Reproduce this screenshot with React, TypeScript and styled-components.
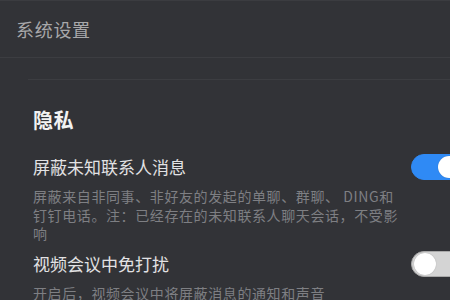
import styled, { createGlobalStyle } from 'styled-components';

const GlobalStyle = createGlobalStyle`
  html, body {
    margin: 0;
    padding: 0;
    background: #323337;
    overflow: hidden;
  }
  body {
    font-family: "Noto Sans CJK SC", "Noto Sans", sans-serif;
  }
`;

interface ISettingItem {
  title: string;
  description: string;
  enabled: boolean;
}

const privacyItems: ISettingItem[] = [
  {
    title: '屏蔽未知联系人消息',
    description:
      '屏蔽来自非同事、非好友的发起的单聊、群聊、 DING和钉钉电话。注：已经存在的未知联系人聊天会话，不受影响',
    enabled: true,
  },
  {
    title: '视频会议中免打扰',
    description: '开启后，视频会议中将屏蔽消息的通知和声音',
    enabled: false,
  },
];

export default function App() {
  return (
    <>
      <GlobalStyle />
      <StyledPage>
        <StyledHeader>
          <StyledHeaderTitle>系统设置</StyledHeaderTitle>
        </StyledHeader>
        <StyledContent>
          <StyledSection>
            <StyledSectionTitle>隐私</StyledSectionTitle>
            {privacyItems.map((item) => (
              <StyledItem key={item.title}>
                <StyledItemHead>
                  <StyledItemTitle>{item.title}</StyledItemTitle>
                  <StyledToggle $on={item.enabled}>
                    <StyledKnob />
                  </StyledToggle>
                </StyledItemHead>
                <StyledItemDesc>{item.description}</StyledItemDesc>
              </StyledItem>
            ))}
          </StyledSection>
        </StyledContent>
      </StyledPage>
    </>
  );
}

const StyledPage = styled.div`
  width: 480px;
  height: 300px;
  background: #323337;
  border-top: 1px solid #3b3c40;
  box-sizing: border-box;
  overflow: hidden;
`;

const StyledHeader = styled.div`
  height: 57px;
  display: flex;
  align-items: center;
  padding-left: 16px;
  border-bottom: 1px solid #3c3d41;
  box-sizing: border-box;
`;

const StyledHeaderTitle = styled.h1`
  margin: 0;
  font-size: 18px;
  font-weight: 400;
  letter-spacing: 0.7px;
  color: #a8a8aa;
`;

const StyledContent = styled.div`
  padding: 21px 0 0 28px;
`;

const StyledSection = styled.div`
  border-top: 1px solid #3c3d41;
  padding-left: 5px;
`;

const StyledSectionTitle = styled.h2`
  margin: 27px 0 21px;
  font-size: 20px;
  line-height: 26px;
  font-weight: 700;
  letter-spacing: 0.5px;
  color: #f2f2f2;
`;

const StyledItem = styled.div`
  margin-bottom: 8px;
`;

const StyledItemHead = styled.div`
  display: flex;
  align-items: center;
  justify-content: space-between;
  width: 430px;
`;

const StyledItemTitle = styled.h3`
  margin: 0;
  font-size: 17px;
  line-height: 24px;
  font-weight: 400;
  color: #e2e2e4;
`;

const StyledItemDesc = styled.p`
  margin: 7px 0 0;
  width: 368px;
  font-size: 14px;
  line-height: 18.5px;
  letter-spacing: 0.6px;
  color: #7e7f83;
`;

const StyledToggle = styled.div<{ $on: boolean }>`
  width: 52px;
  height: 26px;
  border-radius: 13px;
  box-sizing: border-box;
  display: flex;
  align-items: center;
  padding: 0 2px;
  justify-content: ${(p) => (p.$on ? 'flex-end' : 'flex-start')};
  background: ${(p) => (p.$on ? '#2f8af5' : '#d4d4d4')};
  border: 1px solid ${(p) => (p.$on ? '#2f8af5' : '#a9a9a9')};
`;

const StyledKnob = styled.div`
  width: 22px;
  height: 22px;
  border-radius: 50%;
  background: #ffffff;
  box-shadow: 0 0 1px rgba(0, 0, 0, 0.3);
`;
